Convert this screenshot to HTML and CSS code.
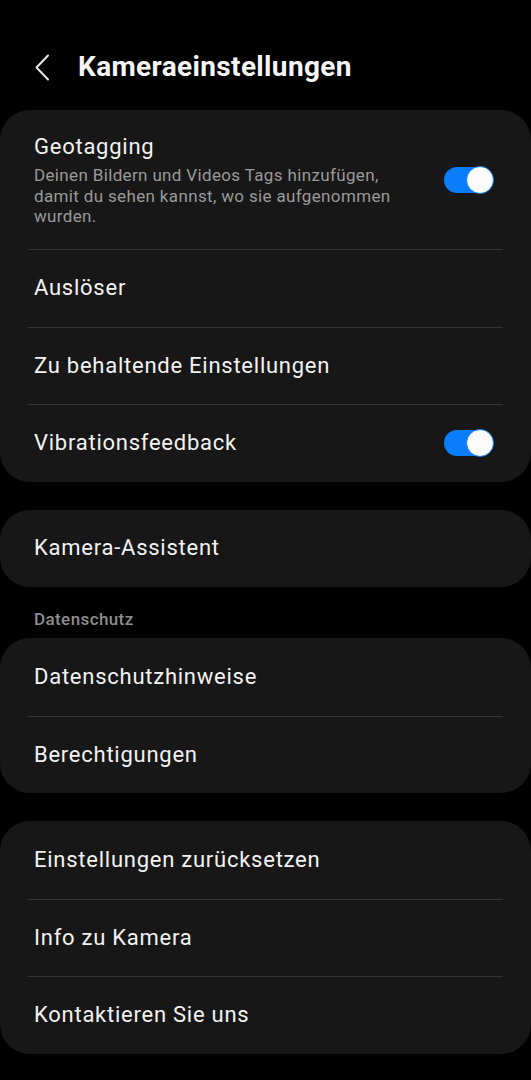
FILE: index.html
```html
<!DOCTYPE html>
<html lang="de">
<head>
    <meta charset="UTF-8">
    <meta name="viewport" content="width=device-width, initial-scale=1.0">
    <title>Kameraeinstellungen</title>
    <link rel="stylesheet" href="styles.css">
</head>
<body>
    <div class="header">
        <svg class="backIcon" width="16" height="27" viewBox="0 0 16 27">
            <path d="M14 1.5 L2.5 13.5 L14 25.5" fill="none" stroke="#e8e8e8" stroke-width="2" stroke-linecap="round" stroke-linejoin="round"/>
        </svg>
        <h1 class="title">Kameraeinstellungen</h1>
    </div>

    <div class="card">
        <div class="row rowTall">
            <div class="rowText">
                <div class="rowLabel">Geotagging</div>
                <div class="rowSub">Deinen Bildern und Videos Tags hinzufügen, damit du sehen kannst, wo sie aufgenommen wurden.</div>
            </div>
            <div class="switch"></div>
        </div>
        <div class="row"><div class="rowLabel">Auslöser</div></div>
        <div class="row"><div class="rowLabel">Zu behaltende Einstellungen</div></div>
        <div class="row">
            <div class="rowLabel">Vibrationsfeedback</div>
            <div class="switch"></div>
        </div>
    </div>

    <div class="card">
        <div class="row"><div class="rowLabel">Kamera-Assistent</div></div>
    </div>

    <div class="sectionLabel">Datenschutz</div>

    <div class="card">
        <div class="row"><div class="rowLabel">Datenschutzhinweise</div></div>
        <div class="row"><div class="rowLabel">Berechtigungen</div></div>
    </div>

    <div class="card">
        <div class="row"><div class="rowLabel">Einstellungen zurücksetzen</div></div>
        <div class="row"><div class="rowLabel">Info zu Kamera</div></div>
        <div class="row"><div class="rowLabel">Kontaktieren Sie uns</div></div>
    </div>
</body>
</html>
```

FILE: styles.css
```css
body {
    font-family: 'Roboto', 'Noto Sans', sans-serif;
    background-color: #000000;
    color: #f2f2f2;
    margin: 0;
}

.header {
    display: flex;
    align-items: center;
    height: 110px;
    box-sizing: border-box;
    padding: 24px 0 0 34px;
}

.backIcon {
    flex-shrink: 0;
    margin-right: 28px;
}

.title {
    font-size: 28px;
    font-weight: 700;
    line-height: 34px;
    letter-spacing: 0.35px;
    margin: 0;
    color: #f5f5f5;
}

.card {
    background-color: #171717;
    border-radius: 30px;
}

.card + .card {
    margin-top: 28px;
}

.row {
    display: flex;
    align-items: center;
    justify-content: space-between;
    height: 77.5px;
    box-sizing: border-box;
    margin: 0 28px;
    padding: 0 10px 0 6px;
}

.row + .row {
    border-top: 1px solid #353535;
}

.rowTall {
    height: 139px;
    padding-top: 1px;
}

.rowText {
    padding-right: 30px;
}

.rowLabel {
    font-size: 22px;
    line-height: 28px;
    letter-spacing: 0.75px;
}

.rowSub {
    font-size: 17px;
    line-height: 20.7px;
    letter-spacing: 0.35px;
    color: #9a9a9a;
    margin-top: 4px;
}

.sectionLabel {
    font-size: 17px;
    font-weight: 500;
    letter-spacing: 0.4px;
    line-height: 20px;
    color: #8e8e8e;
    height: 51px;
    box-sizing: border-box;
    padding: 22px 34px 0;
}

.switch {
    flex-shrink: 0;
    position: relative;
    width: 49px;
    height: 26px;
    border-radius: 13px;
    background-color: #0a7dfa;
}

.switch::after {
    content: "";
    position: absolute;
    right: -1px;
    top: -1px;
    width: 28px;
    height: 28px;
    box-sizing: border-box;
    border-radius: 50%;
    border: 1.5px solid #0a7dfa;
    background-color: #fbfbfb;
}
```
